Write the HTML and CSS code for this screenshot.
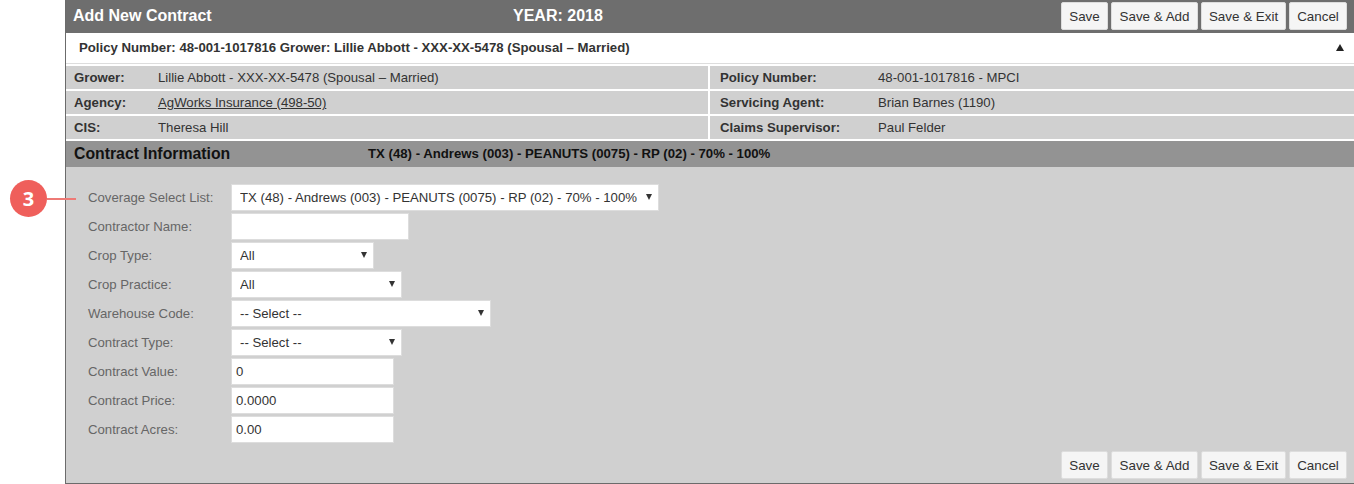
FILE: index.html
```html
<!DOCTYPE html>
<html lang="en">
<head>
	<meta charset="UTF-8">
	<title>Add New Contract</title>
	<meta name="viewport" content="width=device-width, initial-scale=1.0">
	<link rel="stylesheet" href="styles.css">
</head>
<body>
	<div class="callout">
		<span class="callout-badge">3</span>
		<span class="callout-line"></span>
	</div>

	<div class="panel">
		<div class="panel-header">
			<div class="panel-title">Add New Contract</div>
			<div class="panel-year">YEAR: 2018</div>
			<div class="actions">
				<button type="button" class="btn btn-save">Save</button>
				<button type="button" class="btn btn-add">Save &amp; Add</button>
				<button type="button" class="btn btn-exit">Save &amp; Exit</button>
				<button type="button" class="btn btn-cancel">Cancel</button>
			</div>
		</div>

		<div class="policy-bar">
			<span>Policy Number: 48-001-1017816 Grower: Lillie Abbott - XXX-XX-5478 (Spousal – Married)</span>
			<span class="policy-toggle"></span>
		</div>

		<div class="info-grid">
			<div class="info-cell">
				<span class="info-label">Grower:</span>
				<span>Lillie Abbott - XXX-XX-5478 (Spousal – Married)</span>
			</div>
			<div class="info-cell info-right">
				<span class="info-label">Policy Number:</span>
				<span>48-001-1017816 - MPCI</span>
			</div>
			<div class="info-cell">
				<span class="info-label">Agency:</span>
				<a href="#">AgWorks Insurance (498-50)</a>
			</div>
			<div class="info-cell info-right">
				<span class="info-label">Servicing Agent:</span>
				<span>Brian Barnes (1190)</span>
			</div>
			<div class="info-cell">
				<span class="info-label">CIS:</span>
				<span>Theresa Hill</span>
			</div>
			<div class="info-cell info-right">
				<span class="info-label">Claims Supervisor:</span>
				<span>Paul Felder</span>
			</div>
		</div>

		<div class="section-bar">
			<h2>Contract Information</h2>
			<span class="section-summary">TX (48) - Andrews (003) - PEANUTS (0075) - RP (02) - 70% - 100%</span>
		</div>

		<form class="contract-form">
			<div class="form-row">
				<label for="coverage">Coverage Select List:</label>
				<div class="select-wrap w-coverage">
					<select id="coverage"><option>TX (48) - Andrews (003) - PEANUTS (0075) - RP (02) - 70% - 100%</option></select>
				</div>
			</div>
			<div class="form-row">
				<label for="contractor">Contractor Name:</label>
				<input type="text" id="contractor" class="w-name">
			</div>
			<div class="form-row">
				<label for="crop-type">Crop Type:</label>
				<div class="select-wrap w-type">
					<select id="crop-type"><option>All</option></select>
				</div>
			</div>
			<div class="form-row">
				<label for="crop-practice">Crop Practice:</label>
				<div class="select-wrap w-practice">
					<select id="crop-practice"><option>All</option></select>
				</div>
			</div>
			<div class="form-row">
				<label for="warehouse">Warehouse Code:</label>
				<div class="select-wrap w-warehouse">
					<select id="warehouse"><option>-- Select --</option></select>
				</div>
			</div>
			<div class="form-row">
				<label for="contract-type">Contract Type:</label>
				<div class="select-wrap w-practice">
					<select id="contract-type"><option>-- Select --</option></select>
				</div>
			</div>
			<div class="form-row">
				<label for="value">Contract Value:</label>
				<input type="text" id="value" class="w-number" value="0">
			</div>
			<div class="form-row">
				<label for="price">Contract Price:</label>
				<input type="text" id="price" class="w-number" value="0.0000">
			</div>
			<div class="form-row">
				<label for="acres">Contract Acres:</label>
				<input type="text" id="acres" class="w-number" value="0.00">
			</div>
			<div class="actions form-actions">
				<button type="button" class="btn btn-save">Save</button>
				<button type="button" class="btn btn-add">Save &amp; Add</button>
				<button type="button" class="btn btn-exit">Save &amp; Exit</button>
				<button type="button" class="btn btn-cancel">Cancel</button>
			</div>
		</form>
	</div>
</body>
</html>
```

FILE: styles.css
```css
* {
	box-sizing: border-box;
}

body {
	font-family: "Liberation Sans", Arial, sans-serif;
	font-size: 13.2px;
	margin: 0;
	padding: 0;
	background-color: #fff;
	color: #333;
	position: relative;
	height: 484px;
	overflow: hidden;
}

.panel {
	margin-left: 65px;
	height: 484px;
	border-left: 1px solid #6b6b6b;
	border-bottom: 1px solid #6b6b6b;
	display: flex;
	flex-direction: column;
}

/* header */
.panel-header {
	display: flex;
	height: 33px;
	padding: 2px 7px 0 7px;
	background-color: #6e6e6e;
	color: #fff;
	font-size: 16px;
	font-weight: bold;
	line-height: 27px;
}

.panel-title {
	width: 440px;
}

.actions {
	display: flex;
	gap: 3px;
	margin-left: auto;
}

.btn {
	height: 28px;
	padding: 0;
	font-family: inherit;
	font-size: 13.4px;
	color: #333;
	background-color: #f5f5f5;
	border: 1px solid #ddd;
	border-radius: 2px;
}

.btn-save {
	width: 47px;
}

.btn-add {
	width: 87px;
}

.btn-exit {
	width: 85px;
}

.btn-cancel {
	width: 58px;
}

/* policy bar */
.policy-bar {
	display: flex;
	justify-content: space-between;
	align-items: center;
	height: 31px;
	padding: 0 10px 2px 13px;
	background-color: #fff;
	border-bottom: 1px solid #ddd;
	font-weight: bold;
}

.policy-toggle {
	width: 0;
	height: 0;
	border-left: 4.5px solid transparent;
	border-right: 4.5px solid transparent;
	border-bottom: 7px solid #222;
}

/* info rows */
.info-grid {
	display: grid;
	grid-template-columns: 642px 1fr;
	grid-auto-rows: 23px;
	gap: 2px;
	padding: 2px 0;
	background-color: #fff;
}

.info-cell {
	display: flex;
	align-items: center;
	padding-left: 8px;
	background-color: #d0d0d0;
}

.info-right {
	padding-left: 10px;
}

.info-label {
	width: 84px;
	font-weight: bold;
}

.info-right .info-label {
	width: 158px;
}

.info-cell a {
	color: #333;
}

/* section bar */
.section-bar {
	display: flex;
	align-items: center;
	height: 26px;
	padding-left: 8px;
	background-color: #939393;
	color: #111;
	font-weight: bold;
}

.section-bar h2 {
	width: 294px;
	margin: 0;
	font-size: 15.8px;
}

.section-summary {
	margin-bottom: 2px;
}

/* form */
.contract-form {
	flex: 1;
	display: flex;
	flex-direction: column;
	gap: 2px;
	padding: 17px 7px 4px 22px;
	background-color: #d0d0d0;
}

.form-row {
	display: flex;
	align-items: center;
	height: 27px;
}

.form-row label {
	width: 143px;
	color: #666;
}

.form-row input,
.form-row select {
	height: 27px;
	font-family: inherit;
	font-size: 13.2px;
	color: #333;
	background-color: #fff;
	border: 1px solid #ddd;
	border-radius: 0;
}

.form-row input {
	padding: 0 4px;
}

.select-wrap {
	position: relative;
}

.select-wrap select {
	display: block;
	width: 100%;
	padding: 0 8px;
	appearance: none;
}

.select-wrap::after {
	content: "";
	position: absolute;
	right: 7px;
	top: 10px;
	border-left: 3.5px solid transparent;
	border-right: 3.5px solid transparent;
	border-top: 6px solid #333;
	pointer-events: none;
}

.w-coverage {
	width: 428px;
}

.w-name {
	width: 178px;
}

.w-type {
	width: 143px;
}

.w-practice {
	width: 171px;
}

.w-warehouse {
	width: 260px;
}

.w-number {
	width: 163px;
}

.form-actions {
	margin-top: auto;
}

/* annotation in the left margin */
.callout {
	position: absolute;
	left: 10px;
	top: 180px;
	display: flex;
	align-items: center;
	z-index: 2;
}

.callout-badge {
	display: flex;
	align-items: center;
	justify-content: center;
	width: 37px;
	height: 37px;
	border-radius: 50%;
	background-color: #ef5f5b;
	color: #fff;
	font-family: "Open Sans", sans-serif;
	font-size: 20px;
	font-weight: bold;
}

.callout-line {
	width: 29px;
	height: 2px;
	background-color: #ee7a76;
}
```
